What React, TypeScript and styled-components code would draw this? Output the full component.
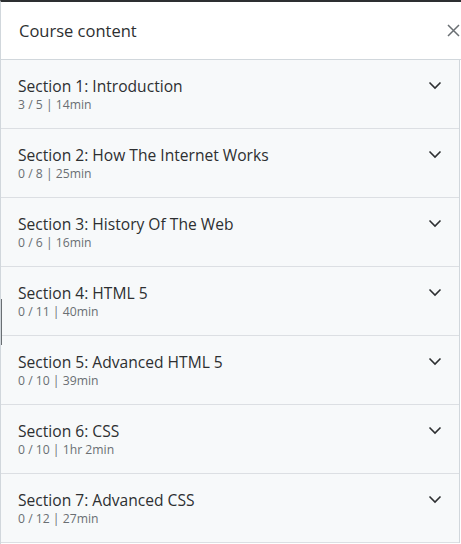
import React from "react";
import styled, { createGlobalStyle } from "styled-components";

const GlobalStyle = createGlobalStyle`
  html, body {
    margin: 0;
    padding: 0;
    background: #ffffff;
  }
  body {
    font-family: "Open Sans", "Noto Sans", "Liberation Sans", sans-serif;
    color: #2d2f31;
  }
`;

const Panel = styled.aside`
  position: relative;
  width: 461px;
  height: 544px;
  overflow: hidden;
  border-top: 2px solid #2d2f31;
  box-sizing: border-box;
  border-left: 1px solid #d1d7dc;
  background: #ffffff;
`;

const ScrollMark = styled.div`
  position: absolute;
  left: -1px;
  top: 297px;
  width: 2px;
  height: 46px;
  background: #6a6f73;
`;

const Header = styled.header`
  height: 58px;
  display: flex;
  align-items: center;
  justify-content: space-between;
  padding: 0 1px 0 18px;
  border-bottom: 1px solid #d1d7dc;
  box-sizing: border-box;
`;

const Title = styled.h2`
  margin: 0;
  font-size: 16.5px;
  font-weight: 400;
  color: #2d2f31;
`;

const CloseButton = styled.button`
  border: none;
  background: none;
  padding: 0;
  width: 14px;
  height: 16px;
  display: flex;
  align-items: center;
  justify-content: center;
  cursor: pointer;
  color: #6a6f73;
`;

const List = styled.div`
  display: flex;
  flex-direction: column;
  border-right: 1px solid #d1d7dc;
  margin-right: 1px;
`;

const Section = styled.div`
  display: flex;
  justify-content: space-between;
  align-items: flex-start;
  padding: 17px 17px 16px 17px;
  background: #f7f9fa;
  border-bottom: 1px solid #dcdfe3;
  height: 69px;
  box-sizing: border-box;
`;

const SectionText = styled.div`
  display: flex;
  flex-direction: column;
`;

const SectionTitle = styled.div`
  font-size: 15.6px;
  font-weight: 400;
  line-height: 19px;
  color: #2d2f31;
`;

const SectionMeta = styled.div`
  font-size: 12.2px;
  line-height: 17px;
  color: #6a6f73;
`;

const Chevron = styled.span`
  display: flex;
  margin-top: 1px;
  color: #2d2f31;
`;

const sections = [
  { title: "Section 1: Introduction", meta: "3 / 5 | 14min" },
  { title: "Section 2: How The Internet Works", meta: "0 / 8 | 25min" },
  { title: "Section 3: History Of The Web", meta: "0 / 6 | 16min" },
  { title: "Section 4: HTML 5", meta: "0 / 11 | 40min" },
  { title: "Section 5: Advanced HTML 5", meta: "0 / 10 | 39min" },
  { title: "Section 6: CSS", meta: "0 / 10 | 1hr 2min" },
  { title: "Section 7: Advanced CSS", meta: "0 / 12 | 27min" },
];

function App() {
  return (
    <>
      <GlobalStyle />
      <Panel>
        <ScrollMark />
        <Header>
          <Title>Course content</Title>
          <CloseButton aria-label="Close">
            <svg width="13" height="13" viewBox="0 0 13 13" fill="none">
              <path d="M1 1L12 12M12 1L1 12" stroke="currentColor" strokeWidth="1.5" />
            </svg>
          </CloseButton>
        </Header>
        <List>
          {sections.map((s) => (
            <Section key={s.title}>
              <SectionText>
                <SectionTitle>{s.title}</SectionTitle>
                <SectionMeta>{s.meta}</SectionMeta>
              </SectionText>
              <Chevron>
                <svg width="14" height="14" viewBox="0 0 14 14" fill="none">
                  <path d="M1.5 4.5L7 10L12.5 4.5" stroke="currentColor" strokeWidth="1.6" />
                </svg>
              </Chevron>
            </Section>
          ))}
        </List>
      </Panel>
    </>
  );
}

export default App;
